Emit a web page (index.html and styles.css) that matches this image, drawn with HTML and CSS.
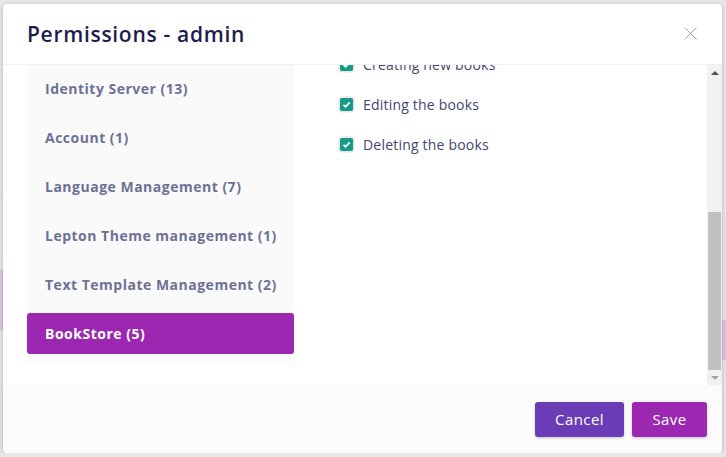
FILE: index.html
```html
<!DOCTYPE html>
<html lang="en">

<head>
    <meta charset="UTF-8">
    <meta name="viewport" content="width=device-width, initial-scale=1.0">
    <title>Permissions - admin</title>

    <link rel="stylesheet" href="styles.css">
</head>

<body>
    <div class="modal">
        <div class="modal-header">
            <h2 class="title">Permissions - admin</h2>
            <span class="close">
                <svg width="13" height="13" viewBox="0 0 13 13">
                    <path d="M0.5 0.5 L12.5 12.5 M12.5 0.5 L0.5 12.5" stroke="#a3a3a3" stroke-width="1" fill="none" />
                </svg>
            </span>
        </div>

        <!-- body is shown scrolled to the bottom -->
        <div class="modal-body">
            <div class="scroll">
                <div class="content">
                    <ul class="groups">
                        <li>Audit Logging (1)</li>
                        <li>Feature Management (1)</li>
                        <li>Identity (20)</li>
                        <li>Saas (12)</li>
                        <li>Setting Management (1)</li>
                        <li>Identity Server (13)</li>
                        <li>Account (1)</li>
                        <li>Language Management (7)</li>
                        <li>Lepton Theme management (1)</li>
                        <li>Text Template Management (2)</li>
                        <li class="active">BookStore (5)</li>
                    </ul>

                    <div class="pane">
                        <h4 class="pane-title">BookStore</h4>
                        <label class="perm"><span class="check"></span>Select all</label>
                        <hr>
                        <label class="perm"><span class="check"></span>Dashboard</label>
                        <label class="perm"><span class="check"></span>Book management</label>
                        <label class="perm"><span class="check"></span>Creating new books</label>
                        <label class="perm"><span class="check"></span>Editing the books</label>
                        <label class="perm"><span class="check"></span>Deleting the books</label>
                    </div>
                </div>
            </div>

            <div class="bar">
                <span class="arrow up"></span>
                <div class="track">
                    <div class="thumb"></div>
                </div>
                <span class="arrow down"></span>
            </div>
        </div>

        <div class="modal-footer">
            <button class="btn cancel">Cancel</button>
            <button class="btn save">Save</button>
        </div>
    </div>
</body>

</html>
```

FILE: styles.css
```css
body {
    margin: 0;
    background:
        linear-gradient(#ddc6e1, #ddc6e1) 0 270px / 3px 60px no-repeat,
        linear-gradient(#ddd, #ddd) 0 199px / 3px 1px no-repeat,
        linear-gradient(#dcc4e0, #dcc4e0) 722px 320px / 4px 40px no-repeat,
        #e8e8e8;
    font-family: 'Open Sans', 'Noto Sans', sans-serif;
}

.modal {
    width: 719px;
    height: 449px;
    margin: 4px 0 0 3px;
    background: #fff;
    border-radius: 4px;
    box-shadow: 0 1px 4px rgba(0, 0, 0, 0.25);
    overflow: hidden;
    display: flex;
    flex-direction: column;
}

.modal-header {
    height: 60px;
    padding: 0 25px 0 24px;
    border-bottom: 1px solid #f1f1f1;
    display: flex;
    align-items: center;
    justify-content: space-between;
}

.title {
    margin: 0;
    font-size: 21px;
    font-weight: 600;
    color: #1b1e4d;
    letter-spacing: 0.7px;
}

.close {
    display: flex;
    margin-top: -1px;
}

.modal-body {
    height: 320px;
    display: flex;
}

.scroll {
    flex: 1;
    overflow: hidden;
    display: flex;
    flex-direction: column;
    justify-content: flex-end;
}

.content {
    flex: none;
    padding: 24px 24px 23px;
    display: flex;
    align-items: flex-start;
}

.groups {
    width: 267px;
    margin: 0;
    padding: 0;
    list-style: none;
    background: #fafafa;
}

.groups li {
    height: 41px;
    margin-bottom: 8px;
    padding-left: 18px;
    display: flex;
    align-items: center;
    font-size: 14px;
    font-weight: 700;
    color: #6c7295;
    letter-spacing: 0.5px;
    border-radius: 3px;
}

.groups li.active {
    background: #9c27b0;
    color: #fff;
}

.pane {
    margin-left: 46px;
}

.pane-title {
    margin: 0 0 31px;
    height: 30px;
    font-size: 16px;
    color: #1b1e4d;
}

.pane hr {
    margin: 19px 0 20px;
    border: 0;
    border-top: 1px solid #eee;
}

.perm {
    height: 40px;
    display: flex;
    align-items: center;
    font-size: 14px;
    color: #3f4770;
    letter-spacing: 0.2px;
}

.check {
    width: 13px;
    height: 13px;
    margin-right: 10px;
    border-radius: 2px;
    background: #179b88 no-repeat center;
    box-shadow: 0 0 0 1.5px #e4e4e4;
    background-image: url("data:image/svg+xml,%3Csvg xmlns='http://www.w3.org/2000/svg' width='9' height='9' viewBox='0 0 9 9'%3E%3Cpath d='M1.5 4.8 L3.6 6.8 L7.6 2.4' stroke='white' stroke-width='1.8' fill='none'/%3E%3C/svg%3E");
}

.bar {
    width: 15px;
    background: #f1f1f1;
    display: flex;
    flex-direction: column;
    align-items: center;
}

.arrow {
    height: 15px;
    width: 15px;
    display: flex;
    align-items: center;
    justify-content: center;
}

.arrow::before {
    content: "";
    border-left: 4px solid transparent;
    border-right: 4px solid transparent;
}

.arrow.up::before {
    border-bottom: 4px solid #505050;
}

.arrow.down::before {
    border-top: 4px solid #a3a3a3;
}

.track {
    flex: 1;
    width: 15px;
    display: flex;
    flex-direction: column;
    justify-content: flex-end;
    align-items: center;
}

.thumb {
    width: 13px;
    height: 158px;
    background: #c1c1c1;
}

.modal-footer {
    flex: 1;
    background: #fbfbfb;
    display: flex;
    justify-content: flex-end;
    align-items: center;
    gap: 8px;
    padding-right: 15px;
}

.btn {
    height: 35px;
    border: 0;
    border-radius: 3px;
    color: #fff;
    font-family: 'Open Sans', 'Noto Sans', sans-serif;
    font-size: 15px;
    letter-spacing: 0.4px;
    box-shadow: 0 1px 3px rgba(0, 0, 0, 0.22);
}

.cancel {
    width: 89px;
    background: #6a3cb6;
}

.save {
    width: 75px;
    background: #9c27b0;
}
```
